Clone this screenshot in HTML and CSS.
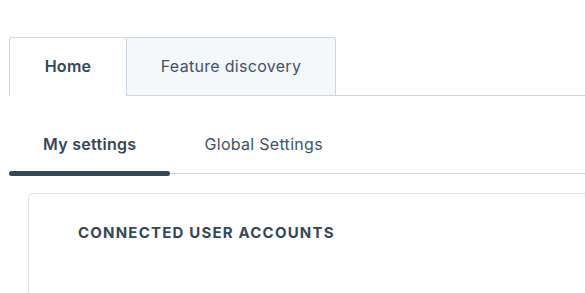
FILE: index.html
```html
<!DOCTYPE html>
<html>
<head>
<meta charset="utf-8">
<link rel="stylesheet" href="styles.css">
</head>
<body>
<div class="page">
  <div class="tabs">
    <div class="tab tab-active">Home</div>
    <div class="tab tab-idle">Feature discovery</div>
    <div class="tab-fill"></div>
  </div>
  <div class="subtabs">
    <div class="subtab subtab-active">
      <div class="subtab-label">My settings</div>
      <div class="subtab-rule"></div>
    </div>
    <div class="subtab">
      <div class="subtab-label">Global Settings</div>
      <div class="subtab-rule"></div>
    </div>
    <div class="subtab subtab-fill">
      <div class="subtab-rule"></div>
    </div>
  </div>
  <div class="card">
    <h2 class="card-title">CONNECTED USER ACCOUNTS</h2>
  </div>
</div>
</body>
</html>
```
FILE: styles.css
```css
html, body {
  margin: 0;
  padding: 0;
  background: #ffffff;
  overflow: hidden;
}
body {
  font-family: Inter, "Noto Sans", sans-serif;
  color: #33475b;
}
.page {
  padding-top: 37px;
  padding-left: 9px;
}
.tabs {
  display: flex;
  height: 59px;
}
.tab {
  box-sizing: border-box;
  height: 59px;
  display: flex;
  align-items: center;
  justify-content: center;
  font-size: 16px;
  letter-spacing: 0.3px;
  white-space: nowrap;
  border-top: 1px solid #cbd6e2;
  border-right: 1px solid #cbd6e2;
  border-radius: 3px 3px 0 0;
}
.tab-active {
  border-left: 1px solid #cbd6e2;
  background: #ffffff;
  font-weight: 600;
  width: 118px;
  padding-bottom: 2px;
}
.tab-idle {
  background: #f5f8fa;
  border-bottom: 1px solid #cbd6e2;
  border-left: none;
  border-radius: 0 3px 0 0;
  width: 209px;
  padding-bottom: 1px;
  color: #3e5368;
}
.tab-fill {
  flex: 1;
  border-bottom: 1px solid #cbd6e2;
}
.subtabs {
  display: flex;
}
.subtab {
  display: flex;
  flex-direction: column;
}
.subtab-label {
  padding: 38px 34px 17px;
  line-height: 20px;
  font-size: 16px;
  letter-spacing: 0.3px;
  color: #3e5368;
  white-space: nowrap;
}
.subtab-active .subtab-label {
  font-weight: 600;
  color: #33475b;
}
.subtab-rule {
  height: 1px;
  margin: 2px 0;
  background: #cbd6e2;
}
.subtab-active .subtab-rule {
  height: 5px;
  margin: 0;
  border-radius: 3px;
  background: #33475b;
}
.subtab-fill {
  flex: 1;
  justify-content: flex-end;
}
.card {
  box-sizing: border-box;
  margin: 17px -20px 0 19px;
  height: 110px;
  border: 1px solid #dfe3eb;
  border-radius: 4px;
  padding: 29px 49px 0;
}
.card-title {
  margin: 0;
  font-size: 15px;
  line-height: 20px;
  font-weight: 700;
  letter-spacing: 1.2px;
}
```
